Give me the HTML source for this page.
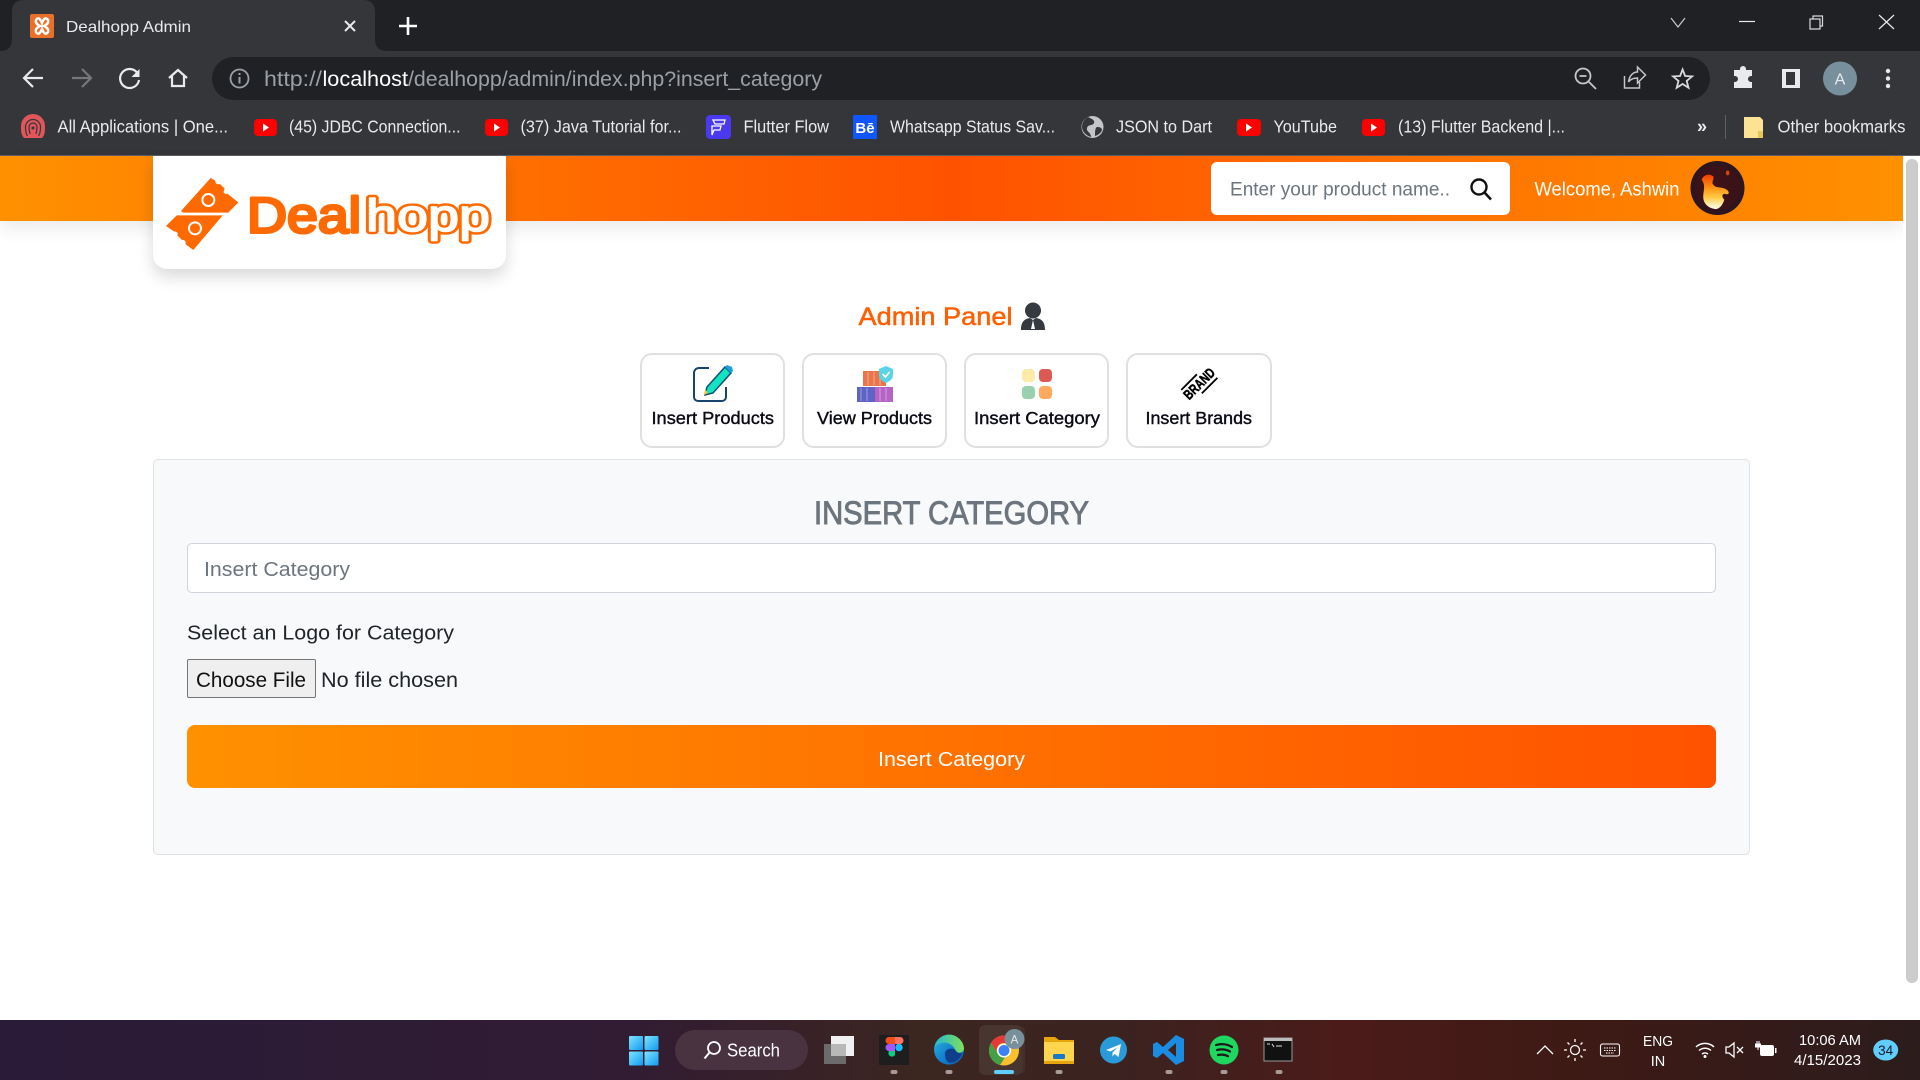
<!DOCTYPE html>
<html lang="en">
<head>
<meta charset="utf-8">
<title>Dealhopp Admin</title>
<style>
html,body{margin:0;padding:0;width:1920px;height:1080px;overflow:hidden;background:#fff}
body{position:relative;font-family:"Liberation Sans",sans-serif}
.a{position:absolute;box-sizing:border-box}
svg{position:absolute;left:0;top:0}
text{font-family:"Liberation Sans",sans-serif}
</style>
</head>
<body>
<div class="a" style="left:0;top:0;width:1920px;height:51px;background:#202124"></div>
<div class="a" style="left:0;top:51px;width:1920px;height:104px;background:#35363a"></div>
<div class="a" style="left:0;top:155px;width:1920px;height:1px;background:#5f6063"></div>
<div class="a" style="left:212px;top:57px;width:1498px;height:43px;background:#202124;border-radius:22px"></div>

<div class="a" style="left:0;top:156px;width:1903px;height:65px;background:linear-gradient(90deg,#ff9100 0%,#ff5200 50%,#ff9100 100%);box-shadow:0 8px 16px rgba(0,0,0,.08)"></div>
<div class="a" style="left:153px;top:156px;width:353px;height:113px;background:#fff;border-radius:0 0 14px 14px;box-shadow:0 8px 16px rgba(0,0,0,.15)"></div>
<div class="a" style="left:1211px;top:162px;width:299px;height:53px;background:#fff;border-radius:6px"></div>
<div class="a" style="left:1903px;top:156px;width:17px;height:864px;background:#fff"></div>
<div class="a" style="left:1906px;top:159px;width:12px;height:824px;background:#ccc;border-radius:6px"></div>

<div class="a" style="left:640px;top:353px;width:145px;height:95px;background:#fff;border:2px solid #e0e0e0;border-radius:12px"></div>
<div class="a" style="left:802px;top:353px;width:145px;height:95px;background:#fff;border:2px solid #e0e0e0;border-radius:12px"></div>
<div class="a" style="left:964px;top:353px;width:145px;height:95px;background:#fff;border:2px solid #e0e0e0;border-radius:12px"></div>
<div class="a" style="left:1126px;top:353px;width:146px;height:95px;background:#fff;border:2px solid #e0e0e0;border-radius:12px"></div>

<div class="a" style="left:153px;top:459px;width:1597px;height:396px;background:#f8f9fa;border:1.5px solid #dfe2e6;border-radius:5px"></div>
<input class="a" type="text" aria-label="Insert Category" style="left:187px;top:542.500px;width:1529px;height:50.500px;background:#fff;border:1.5px solid #ced4da;border-radius:5px;outline:none">
<button class="a" aria-label="Choose File" style="left:187px;top:659px;width:129px;height:39px;background:#efefef;border:1.2px solid #767676;border-radius:2px;padding:0"></button>
<button class="a" aria-label="Insert Category" style="left:187px;top:725px;width:1529px;height:63px;border:0;border-radius:8px;background:linear-gradient(90deg,#ff9100,#ff5200);padding:0"></button>

<div class="a" style="left:0;top:1020px;width:1920px;height:60px;background:linear-gradient(90deg,#2a1b38 0%,#311c33 33%,#3c2620 48%,#3b2320 58%,#4b1b19 70%,#3e1a15 82%,#2c1c1c 100%)"></div>
<div class="a" style="left:675px;top:1030px;width:133px;height:40px;background:#4a3340;border-radius:20px"></div>
<div class="a" style="left:979px;top:1025px;width:43px;height:50px;background:#48352f;border-radius:6px;box-shadow:4px 0 0 -1px #43302a"></div>
<div class="a" style="left:994px;top:1070px;width:20px;height:4px;background:#60cdff;border-radius:2px"></div>

<svg width="1920" height="1080" viewBox="0 0 1920 1080" xmlns="http://www.w3.org/2000/svg">
<defs>
<linearGradient id="fl" x1="0" y1="0" x2="0" y2="1"><stop offset="0" stop-color="#f03a00"/><stop offset=".35" stop-color="#ff8a10"/><stop offset=".65" stop-color="#ffc840"/><stop offset=".9" stop-color="#fff3c0"/><stop offset="1" stop-color="#fffbe8"/></linearGradient>
<linearGradient id="win" x1="0" y1="0" x2="1" y2="1"><stop offset="0" stop-color="#7fe4ff"/><stop offset="1" stop-color="#0f9bf0"/></linearGradient>
<linearGradient id="edge" x1="0" y1="0" x2="1" y2="1"><stop offset="0" stop-color="#2cb8d8"/><stop offset=".5" stop-color="#1583d0"/><stop offset="1" stop-color="#0c5cb0"/></linearGradient>
<linearGradient id="edg" x1="0" y1="0" x2="1" y2="0"><stop offset="0" stop-color="#26b8d0"/><stop offset="1" stop-color="#7fe05a"/></linearGradient>
</defs>

<!-- Tab -->
<path d="M0 51Q12 51 12 39V12Q12 0 24 0H363Q375 0 375 12V39Q375 51 387 51Z" fill="#35363a"/>
<rect x="30" y="14" width="24" height="24" rx="2" fill="#e8702a"/>
<path d="M36 20c2-3 4-2 6 3 2-5 4-6 6-3 1 3-2 5-4 6 2 1 5 3 4 6-2 3-4 2-6-3-2 5-4 6-6 3-1-3 2-5 4-6-2-1-5-3-4-6z" fill="none" stroke="#fff" stroke-width="2.400"/>
<text x="66" y="32" font-size="16" fill="#e8eaed" textLength="125" lengthAdjust="spacingAndGlyphs">Dealhopp Admin</text>
<path d="M345 21l10 10M355 21l-10 10" stroke="#e8eaed" stroke-width="2"/>
<path d="M408 17v18M399 26h18" stroke="#fff" stroke-width="2.600"/>

<!-- Window controls -->
<path d="M1671 18l7 9 7-9" fill="none" stroke="#c8c9cb" stroke-width="1.200"/>
<path d="M1739 21.500h16" stroke="#e8eaed" stroke-width="1.200"/>
<path d="M1810 19h10v10h-10zM1813 19v-3h9.500v10h-2.500" fill="none" stroke="#d8d9db" stroke-width="1.200"/>
<path d="M1879 15l15 14M1894 15l-15 14" stroke="#e8eaed" stroke-width="1.200"/>

<!-- Toolbar icons -->
<path d="M43 78H25M33 69l-9 9 9 9" fill="none" stroke="#e8eaed" stroke-width="2.200"/>
<path d="M72 78h18M82 69l9 9-9 9" fill="none" stroke="#75777a" stroke-width="2.200"/>
<path d="M137 72.500a9.500 9.500 0 1 0 2 7.500" fill="none" stroke="#e8eaed" stroke-width="2.200"/><path d="M139.500 69v8h-8z" fill="#e8eaed"/>
<path d="M169 78l9-8 9 8M172 76v10h12V76" fill="none" stroke="#e8eaed" stroke-width="2.200"/>
<circle cx="239.500" cy="78.500" r="9" fill="none" stroke="#9aa0a6" stroke-width="1.800"/><path d="M239.500 77v6.500M239.500 73v2" stroke="#9aa0a6" stroke-width="2"/>
<text x="264" y="86" font-size="21" fill="#9aa0a6" textLength="58" lengthAdjust="spacingAndGlyphs">http://</text>
<text x="322.500" y="86" font-size="21" fill="#fff" textLength="85.500" lengthAdjust="spacingAndGlyphs">localhost</text>
<text x="408" y="86" font-size="21" fill="#9aa0a6" textLength="414" lengthAdjust="spacingAndGlyphs">/dealhopp/admin/index.php?insert_category</text>

<circle cx="1583" cy="76" r="7.500" fill="none" stroke="#c4c7ca" stroke-width="1.800"/><path d="M1589 82l7 7M1579.500 76h7" stroke="#c4c7ca" stroke-width="1.800"/>
<path d="M1624.500 76v12h15v-6M1628.500 82c1-7 5-10 9-10v-5l8 8-8 8v-5c-4 0-7 1-9 4z" fill="none" stroke="#c4c7ca" stroke-width="1.500"/>
<path d="M1682.600 69.500l2.500 6.500 7 .4-5.400 4.500 1.800 6.900-5.900-3.800-5.900 3.800 1.800-6.900-5.400-4.500 7-.4z" fill="none" stroke="#d6d8da" stroke-width="1.800"/>
<path d="M1734 69h6v-1a3 3 0 0 1 6 0v1h6v6h-1a3 3 0 0 0 0 6h1v6h-18v-6h1a3 3 0 0 0 0-6h-1z" fill="#e8eaed" transform="translate(0 1)"/>
<rect x="1782" y="69" width="18" height="19" fill="#e8eaed"/><rect x="1786" y="72" width="9" height="13" fill="#35363a"/>
<circle cx="1840" cy="78.500" r="17" fill="#78909c"/>
<text x="1840" y="84.500" font-size="16" fill="#e8eaed" text-anchor="middle">A</text>
<circle cx="1888" cy="71" r="2.200" fill="#e8eaed"/><circle cx="1888" cy="78.500" r="2.200" fill="#e8eaed"/><circle cx="1888" cy="86" r="2.200" fill="#e8eaed"/>

<!-- Bookmarks -->
<path d="M24 138c-3-3-3-7-3-12a12 12 0 0 1 24 0c0 5 0 9-3 12z" fill="#e0565a"/>
<path d="M27.500 136c-1.500-2-2-6-2-9a7.500 7.500 0 0 1 15 0c0 3-.500 7-2 9" fill="none" stroke="#35363a" stroke-width="1.200"/><path d="M30 134c-.500-2-1-5-1-7a4 4 0 0 1 8 0c0 2-.500 5-1 7" fill="none" stroke="#35363a" stroke-width="1.200"/><circle cx="33" cy="128" r="1.500" fill="#35363a"/>
<text x="57.500" y="132.500" font-size="17.500" fill="#e8eaed" textLength="170.500" lengthAdjust="spacingAndGlyphs">All Applications | One...</text>
<rect x="254" y="119" width="23" height="17" rx="4" fill="#f00"/><path d="M263 123.500l6 4-6 4z" fill="#fff"/>
<text x="289" y="132.500" font-size="17.500" fill="#e8eaed" textLength="171.500" lengthAdjust="spacingAndGlyphs">(45) JDBC Connection...</text>
<rect x="485" y="119" width="23" height="17" rx="4" fill="#f00"/><path d="M494 123.500l6 4-6 4z" fill="#fff"/>
<text x="520.500" y="132.500" font-size="17.500" fill="#e8eaed" textLength="161" lengthAdjust="spacingAndGlyphs">(37) Java Tutorial for...</text>
<rect x="706" y="115" width="25" height="24" rx="4" fill="#4b39ef"/>
<path d="M713 120h12l-1 4h-9zM712 126h9l-1 4h-6l-2 5z" fill="none" stroke="#fff" stroke-width="1.300"/>
<text x="743.500" y="132.500" font-size="17.500" fill="#e8eaed" textLength="85.500" lengthAdjust="spacingAndGlyphs">Flutter Flow</text>
<rect x="853" y="115" width="24" height="24" fill="#0f56ff"/>
<text x="865" y="133" font-size="15" font-weight="700" fill="#fff" text-anchor="middle">Bē</text>
<text x="890" y="132.500" font-size="17.500" fill="#e8eaed" textLength="165" lengthAdjust="spacingAndGlyphs">Whatsapp Status Sav...</text>
<circle cx="1092.500" cy="127" r="11" fill="#c3c5c8"/><path d="M1088 117c4 2 7 3 6 6s-6 1-7 5 4 4 4 9c-4-1-9-5-9-10 0-4 2-8 6-10zM1097 127c3 0 5 1 5 3-1 3-4 5-7 6 0-4 0-8 2-9z" fill="#35363a"/>
<text x="1116" y="132.500" font-size="17.500" fill="#e8eaed" textLength="96" lengthAdjust="spacingAndGlyphs">JSON to Dart</text>
<rect x="1237" y="119" width="24" height="17" rx="4" fill="#f00"/><path d="M1246 123.500l6 4-6 4z" fill="#fff"/>
<text x="1273.500" y="132.500" font-size="17.500" fill="#e8eaed" textLength="63.500" lengthAdjust="spacingAndGlyphs">YouTube</text>
<rect x="1362" y="119" width="23" height="17" rx="4" fill="#f00"/><path d="M1371 123.500l6 4-6 4z" fill="#fff"/>
<text x="1398" y="132.500" font-size="17.500" fill="#e8eaed" textLength="167" lengthAdjust="spacingAndGlyphs">(13) Flutter Backend |...</text>
<text x="1697" y="132.500" font-size="18" font-weight="700" fill="#e8eaed">»</text>
<path d="M1725.500 115v24" stroke="#5f6063" stroke-width="1"/>
<path d="M1744 117h16l3 3v18h-19z" fill="#fde293"/><path d="M1758 131h5v7h-5z" fill="#e8c45a"/>
<text x="1777.500" y="132.500" font-size="17.500" fill="#e8eaed" textLength="128" lengthAdjust="spacingAndGlyphs">Other bookmarks</text>

<!-- Logo -->
<g transform="translate(150 150) scale(.3333)" fill="#ff6a00">
<path d="M93 183L182 84l14 8c-1 8 6 13 14 10l14 14-2 6c-4 6 3 12 10 9l33 26-30 31H100z" />
<path d="M48 228l32-32h138l-88 104-24-18c4-6-2-14-10-12l-14-14c4-6-2-13-9-11z"/>
<circle cx="175" cy="150" r="18" fill="#ff6a00" stroke="#fff" stroke-width="6"/>
<circle cx="135" cy="235" r="18" fill="#ff6a00" stroke="#fff" stroke-width="6"/>
</g>
<text x="247" y="232.500" font-size="50" fill="#ff6a00" stroke="#ff6a00" stroke-width="3" stroke-linejoin="round" textLength="114" lengthAdjust="spacingAndGlyphs">Deal</text>
<g font-size="45" stroke-linejoin="round" stroke-linecap="round">
<text x="366" y="231" fill="#ff6a00" stroke="#ff6a00" stroke-width="6.400" textLength="124" lengthAdjust="spacingAndGlyphs">hopp</text>
<text x="366" y="231" fill="#fff" stroke="#fff" stroke-width="1.600" textLength="124" lengthAdjust="spacingAndGlyphs">hopp</text>
</g>

<!-- Search header -->
<text x="1230" y="195.500" font-size="19.500" fill="#6c757d" textLength="220" lengthAdjust="spacingAndGlyphs">Enter your product name..</text>
<circle cx="1479" cy="187" r="7.500" fill="none" stroke="#111" stroke-width="2.400"/><path d="M1484.500 192.500l6.500 7" stroke="#111" stroke-width="2.600"/>
<text x="1534.500" y="195.500" font-size="19.500" fill="#fff" textLength="145" lengthAdjust="spacingAndGlyphs">Welcome, Ashwin</text>
<circle cx="1717.500" cy="188" r="27" fill="#2b1520"/>
<g transform="translate(1685 158) scale(.3333)">
<circle cx="97.500" cy="90" r="68" fill="#3a1218"/>
<path d="M50 65C55 52 70 44 85 55C88 68 78 70 85 80C92 92 110 85 125 95C135 102 132 112 122 108C112 105 108 115 118 125C112 145 100 155 90 153C68 150 52 135 55 110C56 95 62 82 50 65Z" fill="url(#fl)"/>
<ellipse cx="128" cy="45" rx="5" ry="7" fill="#e0450a"/>
</g>

<!-- Admin Panel -->
<text x="858.500" y="325" font-size="25" fill="#ff5f00" stroke="#ff5f00" stroke-width=".5" textLength="154" lengthAdjust="spacingAndGlyphs">Admin Panel</text>
<circle cx="1033" cy="310.500" r="8" fill="#343a40"/>
<path d="M1021 330c0-8 3-11 9-12l3 2 3-2c6 1 9 4 9 12z" fill="#343a40"/><path d="M1033 320l-2 9h4z" fill="#fff"/>

<!-- Card icons -->
<path d="M709 368h-10a5 5 0 0 0-5 5v24a4 4 0 0 0 4 4h24a4 4 0 0 0 4-4v-10" fill="none" stroke="#17456e" stroke-width="2"/>
<path d="M725 367l6 6-18 20-8 2 2-8z" fill="#13e3bf" stroke="#0f4e78" stroke-width="1.500"/><path d="M725 367l2-2 5 2 1 4-2 2z" fill="#1b9fdc"/><path d="M705 389l3 4-4 2z" fill="#f5c33b"/>

<rect x="863" y="371" width="23" height="15" fill="#e9764a"/>
<rect x="857" y="387" width="18" height="15" fill="#5f63c4"/><rect x="875" y="387" width="18" height="15" fill="#b563c4"/>
<path d="M868 372v13M874 372v13M880 372v13M861 388v13M867 388v13M880 388v13M886 388v13" stroke="#fff" stroke-opacity=".4" stroke-width="1"/>
<path d="M886 366l7 3v6c0 4-3 6-7 8-4-2-7-4-7-8v-6z" fill="#5cd4e8"/><path d="M882.500 374l3 3 4-5" fill="none" stroke="#fff" stroke-width="1.600"/>

<rect x="1022" y="369" width="13" height="13" rx="4" fill="#fdeaa8"/><rect x="1039" y="369" width="13" height="13" rx="4" fill="#dd5a54"/>
<rect x="1022" y="386" width="13" height="13" rx="4" fill="#98d0b0"/><rect x="1039" y="386" width="13" height="13" rx="4" fill="#fdaa5e"/>

<g transform="rotate(-45 1199 383.500)">
<text x="1180" y="388.500" font-size="14" font-weight="700" fill="#000" stroke="#000" stroke-width=".5" textLength="38" lengthAdjust="spacingAndGlyphs">BRAND</text>
<path d="M1182 375.500h22M1194 392.500h22" stroke="#000" stroke-width="1.800"/>
</g>

<text x="651.500" y="424" font-size="17.600" fill="#0a0a14" stroke="#0a0a14" stroke-width=".4" textLength="122.500" lengthAdjust="spacingAndGlyphs">Insert Products</text>
<text x="817" y="424" font-size="17.600" fill="#0a0a14" stroke="#0a0a14" stroke-width=".4" textLength="115" lengthAdjust="spacingAndGlyphs">View Products</text>
<text x="974" y="424" font-size="17.600" fill="#0a0a14" stroke="#0a0a14" stroke-width=".4" textLength="126" lengthAdjust="spacingAndGlyphs">Insert Category</text>
<text x="1145.500" y="424" font-size="17.600" fill="#0a0a14" stroke="#0a0a14" stroke-width=".4" textLength="106.500" lengthAdjust="spacingAndGlyphs">Insert Brands</text>

<!-- Form -->
<text x="814" y="524" font-size="32" fill="#6c757d" stroke="#6c757d" stroke-width=".9" textLength="275" lengthAdjust="spacingAndGlyphs">INSERT CATEGORY</text>
<text x="204" y="576" font-size="20" fill="#6c757d" textLength="146" lengthAdjust="spacingAndGlyphs">Insert Category</text>
<text x="187" y="639.500" font-size="20" fill="#212529" textLength="267" lengthAdjust="spacingAndGlyphs">Select an Logo for Category</text>
<text x="196" y="687" font-size="21" fill="#111" textLength="110" lengthAdjust="spacingAndGlyphs">Choose File</text>
<text x="321" y="687" font-size="21" fill="#212529" textLength="137" lengthAdjust="spacingAndGlyphs">No file chosen</text>
<text x="878" y="766" font-size="20" fill="#fff" textLength="147" lengthAdjust="spacingAndGlyphs">Insert Category</text>

<!-- Taskbar -->
<g fill="url(#win)"><rect x="629" y="1036" width="14" height="14" rx="1"/><rect x="644.500" y="1036" width="14" height="14" rx="1"/><rect x="629" y="1051.500" width="14" height="14" rx="1"/><rect x="644.500" y="1051.500" width="14" height="14" rx="1"/></g>
<circle cx="714" cy="1048" r="6" fill="none" stroke="#fff" stroke-width="1.800"/><path d="M709.500 1052.500l-5 6" stroke="#fff" stroke-width="2"/>
<text x="727" y="1056.500" font-size="18" fill="#fff" textLength="53" lengthAdjust="spacingAndGlyphs">Search</text>

<rect x="824" y="1044" width="22" height="20" fill="#6b6b6b"/><rect x="831" y="1036" width="23" height="20" fill="#f0f0f0"/><rect x="831" y="1044" width="15" height="12" fill="#b8b8b8"/>

<rect x="879" y="1035" width="30" height="30" fill="#1e1e1e"/>
<path d="M889 1037h6v7h-6a3.500 3.500 0 0 1 0-7z" fill="#f24e1e"/><path d="M895 1037h5a3.500 3.500 0 0 1 0 7h-5z" fill="#ff7262"/>
<path d="M889 1044h6v7h-6a3.500 3.500 0 0 1 0-7z" fill="#a259ff"/><circle cx="899" cy="1047.500" r="3.700" fill="#1abcfe"/>
<path d="M889 1051h6v4a3.500 3.500 0 1 1-6-4z" fill="#0acf83"/>

<g transform="translate(925 1028) scale(.3333)">
<circle cx="72" cy="65" r="45" fill="url(#edge)"/>
<path d="M72 20C95 20 117 40 117 62C117 72 105 76 95 74C90 60 80 46 60 44C45 44 35 50 28 60C32 38 50 20 72 20Z" fill="url(#edg)"/>
<path d="M60 80C58 66 74 58 88 64C95 70 96 76 112 76C104 94 90 106 72 104C62 98 61 90 60 80Z" fill="#0d3f8a"/>
</g>

<g transform="translate(1004 1050.500)">
<circle r="15" fill="#fbc02d"/>
<path d="M0-15A15 15 0 0 1 13-7.500H0A7 7 0 0 0-6 3.500L-13-7.500A15 15 0 0 1 0-15z" fill="#e53935"/>
<path d="M-13-7.500L-6 3.500A7 7 0 0 0 1 7L-4 14.500A15 15 0 0 1-13-7.500z" fill="#43a047"/>
<circle r="7" fill="#fff"/><circle r="5.500" fill="#3b82f6"/>
</g>
<circle cx="1014.500" cy="1039" r="10" fill="#78909c"/><text x="1014.500" y="1043.500" font-size="11.500" fill="#e8eaed" text-anchor="middle">A</text>

<path d="M1044 1037h11l4 3h15v24h-30z" fill="#e8a50c"/><path d="M1044 1042h30v22h-30z" fill="#ffd54f"/><rect x="1053" y="1054" width="12" height="5" rx="1.500" fill="#1a78c2"/><rect x="1044" y="1061" width="30" height="3" fill="#e8a50c"/>

<circle cx="1113.500" cy="1050" r="13.500" fill="#2a9bd8"/><path d="M1106 1050l15-6-2.500 13-4-3-2 2.500v-4l5-5-7 4z" fill="#fff"/>

<path d="M1176 1035l8 4v22l-8 4-13-12-6 5-4-2v-12l4-2 6 5zM1176 1043l-8 7 8 7z" fill="#1a8ce2" fill-rule="evenodd"/>

<circle cx="1224" cy="1050" r="14.500" fill="#1ed760"/>
<path d="M1216 1045c5-1.500 11-1 16 2M1217 1050c4-1 9-.800 13 1.500M1218 1055c3.500-.700 7-.500 10 1.200" fill="none" stroke="#1a1a1a" stroke-width="2.200" stroke-linecap="round"/>

<rect x="1264" y="1038" width="28" height="23" fill="#111" stroke="#999" stroke-width="1"/><path d="M1264 1038h28v3h-28z" fill="#bbb"/><path d="M1267 1044h3M1272 1044l2 3M1276 1046h6" stroke="#ddd" stroke-width="1"/>

<g fill="#a79a98"><rect x="890.500" y="1070" width="7" height="4" rx="2"/><rect x="945.500" y="1070" width="7" height="4" rx="2"/><rect x="1055.500" y="1070" width="7" height="4" rx="2"/><rect x="1165.500" y="1070" width="7" height="4" rx="2"/><rect x="1220.500" y="1070" width="7" height="4" rx="2"/><rect x="1275.500" y="1070" width="7" height="4" rx="2"/></g>

<!-- Tray -->
<path d="M1537 1054l8-8 8 8" fill="none" stroke="#fff" stroke-width="1.300"/>
<circle cx="1575" cy="1050" r="4.500" fill="none" stroke="#fff" stroke-width="1.300"/>
<path d="M1575 1042v-3M1575 1061v-3M1567 1050h-3M1586 1050h-3M1569.500 1044.500l-2-2M1582.500 1057.500l-2-2M1569.500 1055.500l-2 2M1582.500 1042.500l-2 2" stroke="#fff" stroke-width="1.300"/>
<rect x="1600.500" y="1044" width="19" height="12" rx="2" fill="none" stroke="#fff" stroke-width="1.100"/>
<path d="M1604 1048h12M1604 1050.500h12M1606 1053h8" stroke="#fff" stroke-width="1" stroke-dasharray="1.500 1"/>
<text x="1658" y="1046" font-size="14.500" fill="#fff" text-anchor="middle" textLength="30" lengthAdjust="spacingAndGlyphs">ENG</text>
<text x="1658" y="1066" font-size="14.500" fill="#fff" text-anchor="middle">IN</text>
<path d="M1696 1047a13 13 0 0 1 18 0M1699 1050.500a9 9 0 0 1 12 0M1702 1054a5 5 0 0 1 6 0" fill="none" stroke="#fff" stroke-width="1.500"/><circle cx="1705" cy="1056.500" r="1.500" fill="#fff"/>
<path d="M1726 1047h3l5-4v14l-5-4h-3z" fill="none" stroke="#fff" stroke-width="1.300"/><path d="M1737 1047l6 6M1743 1047l-6 6" stroke="#fff" stroke-width="1.300"/>
<rect x="1760" y="1045" width="14" height="11" rx="2" fill="#fff"/><rect x="1775" y="1048" width="1.500" height="5" fill="#fff"/>
<path d="M1757 1044v-3M1759 1044v-3M1755.500 1044h5v3h-5zM1758 1047v3" stroke="#fff" stroke-width="1" fill="#fff"/>
<text x="1861" y="1045" font-size="14.500" fill="#fff" text-anchor="end" textLength="62" lengthAdjust="spacingAndGlyphs">10:06 AM</text>
<text x="1861" y="1065" font-size="14.500" fill="#fff" text-anchor="end" textLength="67" lengthAdjust="spacingAndGlyphs">4/15/2023</text>
<ellipse cx="1885.700" cy="1050" rx="12.500" ry="10.500" fill="#60cdff"/>
<text x="1885.700" y="1055" font-size="13.500" fill="#1a1a2a" text-anchor="middle">34</text>
</svg>
</body>
</html>
